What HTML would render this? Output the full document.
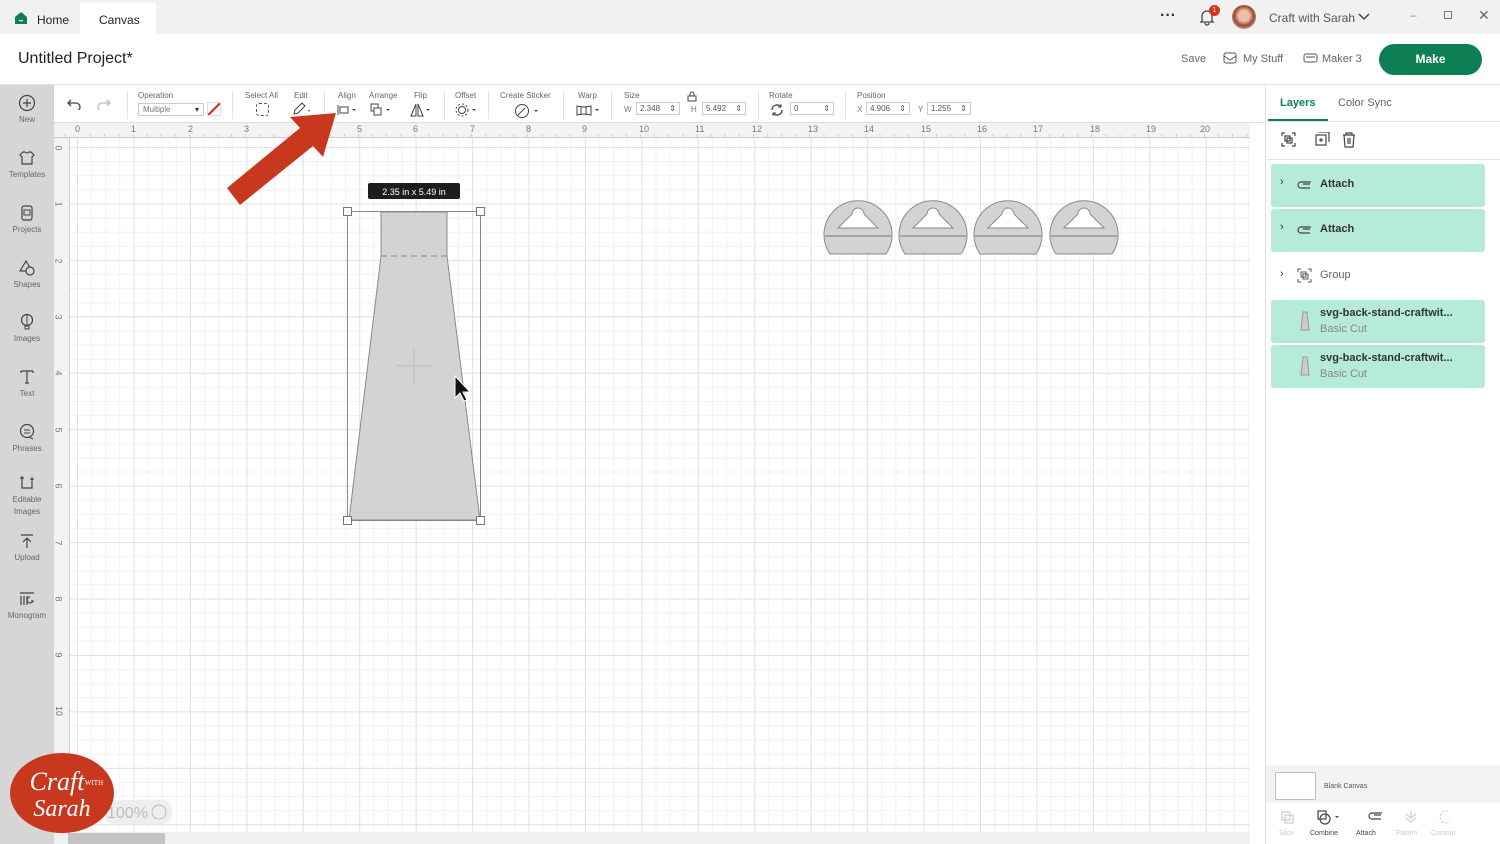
<!DOCTYPE html>
<html><head><meta charset="utf-8"><style>
*{box-sizing:border-box;margin:0;padding:0}
body{width:1500px;height:844px;overflow:hidden;font-family:"Liberation Sans",sans-serif;background:#fff;position:relative;color:#333}
.abs{position:absolute}
.top{left:0;top:0;width:1500px;height:34px;background:#f1f1f1}
.tab{font-size:12px;color:#222}
.hdr{left:0;top:34px;width:1500px;height:51px;background:#fff;border-bottom:1px solid #e3e3e3}
.tb{left:54px;top:85px;width:1211px;height:38px;background:#fff;border-bottom:1px solid #ddd}
.lbl{font-size:8px;color:#666;position:absolute;top:6px}
.sep{position:absolute;top:6px;width:1px;height:28px;background:#e2e2e2}
.side{left:0;top:85px;width:54px;height:759px;background:#d6d6d6}
.si{position:absolute;left:0;width:54px;text-align:center;font-size:8px;color:#666}
.si svg{display:block;margin:0 auto 3px}
.rul-t{left:54px;top:123px;width:1196px;height:15px;background:#f3f3f3;border-bottom:1px solid #ccc;
background-image:repeating-linear-gradient(90deg,transparent 0 13.1px,#d0d0d0 13.1px 14.1px);background-size:auto 4px;background-repeat:repeat-x;background-position:23px 11px}
.rul-l{left:54px;top:138px;width:16px;height:694px;background:#f3f3f3;border-right:1px solid #ccc}
.grid{left:70px;top:138px;width:1180px;height:694px;background-color:#fff;
background-image:linear-gradient(90deg,#e2e2e2 1px,transparent 1px),linear-gradient(#e2e2e2 1px,transparent 1px),linear-gradient(90deg,#f1f1f1 1px,transparent 1px),linear-gradient(#f1f1f1 1px,transparent 1px);
background-size:56.45px 56.45px,56.45px 56.45px,14.11px 14.11px,14.11px 14.11px;background-position:7px 9px,7px 9px,7px 9px,7px 9px}
.num{position:absolute;font-size:9px;color:#777}
.rp{left:1265px;top:85px;width:235px;height:759px;background:#fff;border-left:1px solid #ddd}
.layer{position:absolute;left:5px;width:214px;background:#b6ead9;border-radius:3px}
.lt{font-size:11px;font-weight:bold;color:#333}
</style></head><body>
<div class="abs top">
  <svg class="abs" style="left:14px;top:11px" width="14" height="14" viewBox="0 0 14 14"><path d="M1 6L7 1l6 5v7H1z" fill="#0e7f55"/><path d="M5 9q2 2 4 0" stroke="#fff" fill="none"/></svg>
  <div class="abs tab" style="left:37px;top:13px">Home</div>
  <div class="abs" style="left:80px;top:3px;width:76px;height:31px;background:#fff"></div>
  <div class="abs tab" style="left:99px;top:13px">Canvas</div>
  <div class="abs" style="left:1160px;top:7px;font-size:16px;font-weight:bold;color:#333">···</div>
  <svg class="abs" style="left:1198px;top:8px" width="18" height="18" viewBox="0 0 18 18"><path d="M4 13V8a5 5 0 0110 0v5l1 1H3zM7 15a2 2 0 004 0" stroke="#444" fill="none" stroke-width="1.3"/></svg>
  <div class="abs" style="left:1209px;top:5px;width:11px;height:11px;border-radius:50%;background:#d9341c;color:#fff;font-size:7px;text-align:center;line-height:11px">1</div>
  <div class="abs" style="left:1232px;top:5px;width:24px;height:24px;border-radius:50%;background:radial-gradient(circle at 50% 45%,#e9c2a8 30%,#9a4a32 55%,#c9b2a6 80%)"></div>
  <div class="abs" style="left:1269px;top:11px;font-size:12px;color:#555">Craft with Sarah</div>
  <svg class="abs" style="left:1358px;top:13px" width="12" height="8"><path d="M1 1l5 5 5-5" stroke="#444" fill="none" stroke-width="1.5"/></svg>
  <div class="abs" style="left:1410px;top:8px;font-size:12px;color:#999">–</div>
  <div class="abs" style="left:1444px;top:11px;width:8px;height:8px;border:1px solid #777"></div>
  <div class="abs" style="left:1478px;top:7px;font-size:14px;color:#666">✕</div>
</div>
<div class="abs hdr">
  <div class="abs" style="left:18px;top:16px;font-size:16px;color:#222">Untitled Project*</div>
  <div class="abs" style="left:1181px;top:19px;font-size:11px;color:#666">Save</div>
  <svg class="abs" style="left:1223px;top:18px" width="14" height="12"><rect x="1" y="1" width="12" height="10" rx="2" stroke="#555" fill="none"/><path d="M1 4l6 4 6-4" stroke="#555" fill="none"/></svg>
  <div class="abs" style="left:1243px;top:19px;font-size:11px;color:#666">My Stuff</div>
  <svg class="abs" style="left:1303px;top:19px" width="15" height="10"><rect x="1" y="1" width="13" height="8" rx="2" stroke="#555" fill="none"/><path d="M3 4h9" stroke="#555"/></svg>
  <div class="abs" style="left:1322px;top:19px;font-size:11px;color:#666">Maker 3</div>
  <div class="abs" style="left:1379px;top:10px;width:103px;height:31px;border-radius:16px;background:#0e7f55;color:#fff;font-size:12px;font-weight:bold;text-align:center;line-height:31px">Make</div>
</div>
<div class="abs tb">
  <svg class="abs" style="left:12px;top:13px" width="16" height="12"><path d="M5 2L2 5l3 3M2 5h8a4 4 0 010 8H7" stroke="#444" fill="none" stroke-width="1.3"/></svg>
  <svg class="abs" style="left:42px;top:13px" width="16" height="12"><path d="M11 2l3 3-3 3M14 5H6a4 4 0 000 8h3" stroke="#bbb" fill="none" stroke-width="1.3"/></svg>
  <div class="sep" style="left:73px"></div>
  <div class="lbl" style="left:84px">Operation</div>
  <div class="abs" style="left:84px;top:18px;width:66px;height:13px;border:1px solid #ccc;font-size:8px;color:#777;padding:1px 4px">Multiple<span style="float:right;color:#333">▾</span></div>
  <div class="abs" style="left:153px;top:17px;width:14px;height:14px;border:1px solid #ddd;background:linear-gradient(135deg,transparent 45%,#d7301f 45% 58%,transparent 58%)"></div>
  <div class="sep" style="left:178px"></div>
  <div class="lbl" style="left:191px">Select All</div>
  <div class="abs" style="left:202px;top:18px;width:13px;height:13px;border:1px dashed #555;border-radius:3px"></div>
  <div class="lbl" style="left:240px">Edit</div>
  <svg class="abs" style="left:238px;top:17px" width="20" height="14"><path d="M2 12l1-4 7-7 3 3-7 7z" stroke="#444" fill="none"/><path d="M16 8l2 0-1 2z" fill="#444"/></svg>
  <div class="sep" style="left:270px"></div>
  <div class="lbl" style="left:284px">Align</div>
  <svg class="abs" style="left:283px;top:19px" width="22" height="12"><path d="M1 1v10" stroke="#444"/><rect x="3" y="3" width="8" height="6" stroke="#444" fill="none"/><path d="M15 5h4l-2 2z" fill="#444"/></svg>
  <div class="lbl" style="left:315px">Arrange</div>
  <svg class="abs" style="left:316px;top:18px" width="22" height="14"><rect x="1" y="1" width="7" height="7" stroke="#444" fill="none"/><rect x="4" y="5" width="7" height="7" stroke="#444" fill="#fff"/><path d="M16 6h4l-2 2z" fill="#444"/></svg>
  <div class="lbl" style="left:360px">Flip</div>
  <svg class="abs" style="left:356px;top:18px" width="22" height="14"><path d="M6 1L1 13h5zM8 1l5 12H8z" stroke="#444" fill="none"/><path d="M16 6h4l-2 2z" fill="#444"/></svg>
  <div class="sep" style="left:390px"></div>
  <div class="lbl" style="left:401px">Offset</div>
  <svg class="abs" style="left:401px;top:18px" width="22" height="14"><circle cx="7" cy="7" r="3.5" stroke="#444" fill="none"/><circle cx="7" cy="7" r="6" stroke="#444" fill="none" stroke-dasharray="2 2"/><path d="M17 6h4l-2 2z" fill="#444"/></svg>
  <div class="sep" style="left:434px"></div>
  <div class="lbl" style="left:446px">Create Sticker</div>
  <svg class="abs" style="left:460px;top:18px" width="26" height="16"><circle cx="8" cy="8" r="6.5" stroke="#444" fill="none"/><path d="M4 12l7-7" stroke="#444"/><path d="M20 7h4l-2 2z" fill="#444"/></svg>
  <div class="sep" style="left:509px"></div>
  <div class="lbl" style="left:524px">Warp</div>
  <svg class="abs" style="left:522px;top:19px" width="26" height="12"><path d="M1 2q7 2 14 0v9q-7-2-14 0zM5 2v9M10 2v9" stroke="#444" fill="none"/><path d="M19 5h4l-2 2z" fill="#444"/></svg>
  <div class="sep" style="left:557px"></div>
  <div class="lbl" style="left:570px">Size</div>
  <svg class="abs" style="left:633px;top:6px" width="10" height="11"><rect x="1" y="5" width="8" height="5" stroke="#444" fill="none"/><path d="M3 5V3a2 2 0 014 0v2" stroke="#444" fill="none"/></svg>
  <div class="num" style="left:570px;top:20px;font-size:8px">W</div>
  <div class="abs" style="left:582px;top:17px;width:44px;height:13px;border:1px solid #ccc;font-size:8px;color:#555;padding:1px 3px">2.348<span style="float:right">⇕</span></div>
  <div class="num" style="left:637px;top:20px;font-size:8px">H</div>
  <div class="abs" style="left:648px;top:17px;width:44px;height:13px;border:1px solid #ccc;font-size:8px;color:#555;padding:1px 3px">5.492<span style="float:right">⇕</span></div>
  <div class="sep" style="left:704px"></div>
  <div class="lbl" style="left:715px">Rotate</div>
  <svg class="abs" style="left:716px;top:18px" width="14" height="14"><path d="M2 7a5 5 0 019-3M12 7a5 5 0 01-9 3" stroke="#444" fill="none" stroke-width="1.3"/><path d="M11 1v3H8M3 13v-3h3" stroke="#444" fill="none"/></svg>
  <div class="abs" style="left:736px;top:17px;width:44px;height:13px;border:1px solid #ccc;font-size:8px;color:#555;padding:1px 3px">0<span style="float:right">⇕</span></div>
  <div class="sep" style="left:791px"></div>
  <div class="lbl" style="left:803px">Position</div>
  <div class="num" style="left:803px;top:20px;font-size:8px">X</div>
  <div class="abs" style="left:812px;top:17px;width:44px;height:13px;border:1px solid #ccc;font-size:8px;color:#555;padding:1px 3px">4.906<span style="float:right">⇕</span></div>
  <div class="num" style="left:864px;top:20px;font-size:8px">Y</div>
  <div class="abs" style="left:873px;top:17px;width:44px;height:13px;border:1px solid #ccc;font-size:8px;color:#555;padding:1px 3px">1.255<span style="float:right">⇕</span></div>
</div>
<div class="abs side">
  <div class="si" style="top:9px"><svg width="18" height="18"><circle cx="9" cy="9" r="7.5" stroke="#444" fill="none" stroke-width="1.2"/><path d="M9 5v8M5 9h8" stroke="#444" stroke-width="1.2"/></svg>New</div>
  <div class="si" style="top:64px"><svg width="18" height="18"><path d="M5 3l-3 3 2 2v7h10V8l2-2-3-3h-2q-2 2-4 0z" stroke="#444" fill="none" stroke-width="1.2"/></svg>Templates</div>
  <div class="si" style="top:119px"><svg width="18" height="18"><rect x="4" y="2" width="10" height="14" rx="2" stroke="#444" fill="none" stroke-width="1.2"/><rect x="6" y="6" width="6" height="5" stroke="#444" fill="none"/></svg>Projects</div>
  <div class="si" style="top:174px"><svg width="18" height="18"><path d="M8 2L2 12h12z" stroke="#444" fill="none" stroke-width="1.2"/><circle cx="12" cy="12" r="4" stroke="#444" fill="#d6d6d6" stroke-width="1.2"/></svg>Shapes</div>
  <div class="si" style="top:228px"><svg width="18" height="18"><circle cx="9" cy="7" r="5.5" stroke="#444" fill="none" stroke-width="1.2"/><path d="M9 2v10M7 13h4v3H7z" stroke="#444" fill="none"/></svg>Images</div>
  <div class="si" style="top:283px"><svg width="18" height="18"><path d="M3 3h12M9 3v12M3 3v2M15 3v2M7 15h4" stroke="#444" fill="none" stroke-width="1.2"/></svg>Text</div>
  <div class="si" style="top:338px"><svg width="18" height="18"><circle cx="9" cy="8" r="6.5" stroke="#444" fill="none" stroke-width="1.2"/><path d="M6 7h6M6 10h6M11 14l4 2" stroke="#444"/></svg>Phrases</div>
  <div class="si" style="top:388px;line-height:12px"><svg width="18" height="18"><path d="M4 6v9h10V8M4 3v3M2 5h4" stroke="#444" fill="none" stroke-width="1.2"/><circle cx="14" cy="6" r="1.5" fill="#444"/></svg>Editable<br>Images</div>
  <div class="si" style="top:447px"><svg width="18" height="18"><path d="M3 3h12M9 16V7M5 10l4-4 4 4" stroke="#444" fill="none" stroke-width="1.2"/></svg>Upload</div>
  <div class="si" style="top:505px"><svg width="18" height="18"><path d="M2 3h14M3 6v9M6 6v9M9 6v9M12 7a3 3 0 103 4h-2" stroke="#444" fill="none" stroke-width="1.2"/></svg>Monogram</div>
</div>
<div class="abs rul-t"></div>
<div class="abs rul-l"></div>
<div class="abs grid"></div>
<div class="abs" style="left:0;top:124px;width:1250px;height:14px">
<span class="num" style="left:75px">0</span><span class="num" style="left:131px">1</span><span class="num" style="left:188px">2</span><span class="num" style="left:244px">3</span><span class="num" style="left:301px">4</span><span class="num" style="left:357px">5</span><span class="num" style="left:413px">6</span><span class="num" style="left:470px">7</span><span class="num" style="left:526px">8</span><span class="num" style="left:582px">9</span><span class="num" style="left:639px">10</span><span class="num" style="left:695px">11</span><span class="num" style="left:752px">12</span><span class="num" style="left:808px">13</span><span class="num" style="left:864px">14</span><span class="num" style="left:921px">15</span><span class="num" style="left:977px">16</span><span class="num" style="left:1033px">17</span><span class="num" style="left:1090px">18</span><span class="num" style="left:1146px">19</span><span class="num" style="left:1200px">20</span>
</div>
<div class="abs" style="left:56px;top:140px;width:12px;height:690px">
<span class="num" style="left:0;top:3px;transform:rotate(90deg)">0</span><span class="num" style="left:0;top:59px;transform:rotate(90deg)">1</span><span class="num" style="left:0;top:116px;transform:rotate(90deg)">2</span><span class="num" style="left:0;top:172px;transform:rotate(90deg)">3</span><span class="num" style="left:0;top:228px;transform:rotate(90deg)">4</span><span class="num" style="left:0;top:285px;transform:rotate(90deg)">5</span><span class="num" style="left:0;top:341px;transform:rotate(90deg)">6</span><span class="num" style="left:0;top:398px;transform:rotate(90deg)">7</span><span class="num" style="left:0;top:454px;transform:rotate(90deg)">8</span><span class="num" style="left:0;top:510px;transform:rotate(90deg)">9</span><span class="num" style="left:-2px;top:566px;transform:rotate(90deg)">10</span>
</div>
<svg class="abs" style="left:0;top:0" width="1250" height="844">
  <path d="M381 212H447V256L480 520H349L381 256Z" fill="#d3d3d5" stroke="#8a8a8a"/>
  <path d="M381 256H447" stroke="#888" stroke-dasharray="6 4"/>
  <path d="M414 348v36M396 366h36" stroke="#bbb"/>
  <rect x="347.5" y="211.5" width="133" height="309" fill="none" stroke="#888"/>
  <g fill="#fff" stroke="#777"><rect x="343.5" y="207.5" width="8" height="8"/><rect x="476.5" y="207.5" width="8" height="8"/><rect x="343.5" y="516.5" width="8" height="8"/><rect x="476.5" y="516.5" width="8" height="8"/></g>
  <rect x="368" y="183" width="92" height="16" rx="2" fill="#1d1d1d"/>
  <text x="414" y="195" font-size="9" fill="#fff" text-anchor="middle" font-family="Liberation Sans">2.35  in x 5.49  in</text>
  <g id="c">
    <path d="M830 254A34 34 0 1 1 886 254Z" fill="#d3d3d5" stroke="#8a8a8a"/>
    <path d="M825 236H891" stroke="#777"/>
    <path d="M838 228L852 214A6 6 0 1 1 864 214L878 228Z" fill="#fff" stroke="#8a8a8a"/>
  </g>
  <use href="#c" x="75"/><use href="#c" x="150"/><use href="#c" x="226"/>
  <path d="M455 376v22l5-5 4 8 3-1-4-8h7z" fill="#111" stroke="#fff"/>
  <path d="M227 188L300 128L290 117L336 113L323 157L313 146L240 205Z" fill="#c8381f"/>
  <rect x="1251" y="138" width="11" height="694" fill="#f1f1f1"/>
  <rect x="1252" y="138" width="9" height="34" fill="#c4c4c4"/>
  <rect x="54" y="832" width="1210" height="12" fill="#f1f1f1"/>
  <rect x="68" y="833" width="97" height="11" fill="#c4c4c4"/>
  <rect x="104" y="800" width="68" height="24" rx="10" fill="#eee"/>
  <text x="107" y="818" font-size="16" fill="#bbb" font-family="Liberation Sans">100%</text>
  <circle cx="159" cy="812" r="7" stroke="#bbb" fill="none"/>
  <ellipse cx="62" cy="793" rx="52" ry="40" fill="#c8381f"/>
  <text x="57" y="790" font-size="26" fill="#fff" font-style="italic" text-anchor="middle" font-family="Liberation Serif">Craft</text>
  <text x="94" y="785" font-size="7" fill="#fff" text-anchor="middle" font-family="Liberation Serif">WITH</text>
  <text x="62" y="816" font-size="24" fill="#fff" font-style="italic" text-anchor="middle" font-family="Liberation Serif">Sarah</text>
</svg>
<div class="abs rp">
  <div class="abs" style="left:14px;top:12px;font-size:11px;color:#0e7f55;font-weight:bold">Layers</div>
  <div class="abs" style="left:72px;top:12px;font-size:11px;color:#666">Color Sync</div>
  <div class="abs" style="left:2px;top:34px;width:60px;height:2px;background:#0e7f55"></div>
  <div class="abs" style="left:0;top:36px;width:235px;height:1px;background:#e5e5e5"></div>
  <svg class="abs" style="left:15px;top:47px" width="90" height="16"><g stroke="#444" fill="none" stroke-width="1.2"><path d="M1 4V1h3M11 1h3v3M14 11v3h-3M4 14H1v-3"/><rect x="4" y="4" width="5" height="5"/><rect x="6" y="6" width="5" height="5"/><rect x="35" y="3" width="10" height="10"/><path d="M38 0h10v10M40 6v4M38 8h4"/><path d="M62 3h12M65 3V1h6v2M63 3l1 12h8l1-12M67 6v6M69 6v6"/></g></svg>
  <div class="abs" style="left:0;top:74px;width:235px;height:1px;background:#e5e5e5"></div>
  <div class="layer" style="top:79px;height:43px"><span class="abs" style="left:9px;top:12px;font-size:11px">›</span><svg class="abs" style="left:26px;top:15px" width="16" height="10"><path d="M14 3H4a3 3 0 000 6h9M6 5h7" stroke="#444" fill="none" stroke-width="1.2"/></svg><span class="abs lt" style="left:49px;top:14px">Attach</span></div>
  <div class="layer" style="top:124px;height:43px"><span class="abs" style="left:9px;top:12px;font-size:11px">›</span><svg class="abs" style="left:26px;top:15px" width="16" height="10"><path d="M14 3H4a3 3 0 000 6h9M6 5h7" stroke="#444" fill="none" stroke-width="1.2"/></svg><span class="abs lt" style="left:49px;top:14px">Attach</span></div>
  <div class="abs" style="left:14px;top:183px;font-size:11px">›</div>
  <svg class="abs" style="left:31px;top:183px" width="15" height="15"><g stroke="#555" fill="none"><path d="M1 4V1h3M11 1h3v3M14 11v3h-3M4 14H1v-3"/><rect x="4" y="4" width="5" height="5"/><rect x="6" y="6" width="5" height="5"/></g></svg>
  <div class="abs" style="left:54px;top:184px;font-size:11px;color:#666">Group</div>
  <div class="layer" style="top:215px;height:43px"><svg class="abs" style="left:29px;top:11px" width="10" height="20"><path d="M3 1h4l2 18H1z" fill="#ccc" stroke="#999"/></svg><span class="abs lt" style="left:49px;top:7px">svg-back-stand-craftwit...</span><span class="abs" style="left:49px;top:23px;font-size:11px;color:#888">Basic Cut</span></div>
  <div class="layer" style="top:260px;height:43px"><svg class="abs" style="left:29px;top:11px" width="10" height="20"><path d="M3 1h4l2 18H1z" fill="#ccc" stroke="#999"/></svg><span class="abs lt" style="left:49px;top:7px">svg-back-stand-craftwit...</span><span class="abs" style="left:49px;top:23px;font-size:11px;color:#888">Basic Cut</span></div>
  <div class="abs" style="left:0;top:680px;width:235px;height:38px;background:#f2f2f2"></div>
  <div class="abs" style="left:9px;top:687px;width:41px;height:28px;border:1px solid #bbb;background:#fff;border-radius:2px"></div>
  <div class="abs" style="left:58px;top:698px;font-size:7px;color:#555">Blank Canvas</div>
  <div class="abs" style="left:13px;top:745px;font-size:7px;color:#ccc">Slice</div>
  <div class="abs" style="left:44px;top:745px;font-size:7px;color:#444">Combine</div>
  <div class="abs" style="left:90px;top:745px;font-size:7px;color:#444">Attach</div>
  <div class="abs" style="left:130px;top:745px;font-size:7px;color:#ccc">Flatten</div>
  <div class="abs" style="left:165px;top:745px;font-size:7px;color:#ccc">Contour</div>
  <svg class="abs" style="left:14px;top:725px" width="170" height="16"><g fill="none" stroke-width="1.2"><rect x="2" y="2" width="8" height="8" stroke="#ccc"/><rect x="5" y="5" width="8" height="8" stroke="#ccc"/><rect x="38" y="1" width="8" height="8" stroke="#444"/><circle cx="45" cy="9" r="5" stroke="#444"/><path d="M102 3H92a3 3 0 000 6h9M94 5h7" stroke="#444"/><path d="M126 4l5 4 5-4M126 8l5 4 5-4M131 1v6" stroke="#ccc"/><circle cx="166" cy="7" r="6" stroke="#ccc" stroke-dasharray="2 2"/></g><path d="M55 6h4l-2 2z" fill="#444"/></svg>
</div>
</body></html>
